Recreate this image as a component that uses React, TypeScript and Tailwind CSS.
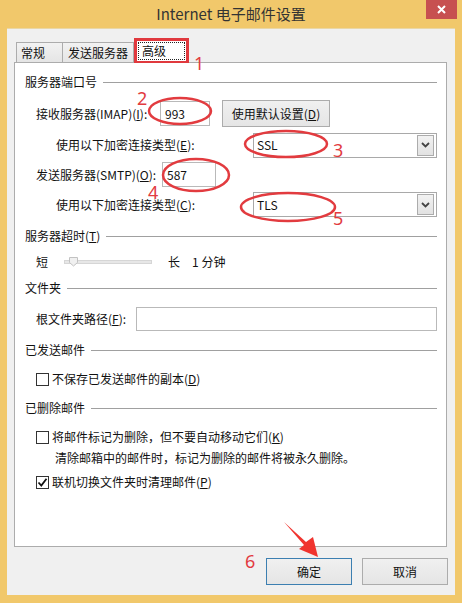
import React from 'react';

const font = "font-['Microsoft_YaHei','Noto_Sans_CJK_SC',sans-serif]";

function Header({ title }: { title: React.ReactNode }) {
  return (
    <div className="flex h-4 items-center">
      <span className="whitespace-nowrap">{title}</span>
      <div className="ml-[6px] h-px flex-1 bg-[#a0a0a0]" />
    </div>
  );
}

function Dropdown({ value }: { value: string }) {
  return (
    <div className="flex h-[25px] flex-1 items-center border border-[#a9a9a9] bg-white pl-[3px] pr-[2px]">
      <span className="flex-1">{value}</span>
      <div className="flex h-[21px] w-[17px] items-center justify-center border border-[#acacac] bg-gradient-to-b from-[#f2f2f2] to-[#e2e2e2]">
        <svg width="9" height="6" viewBox="0 0 9 6">
          <path d="M1 1 L4.5 4.5 L8 1" fill="none" stroke="#444" strokeWidth="1.8" />
        </svg>
      </div>
    </div>
  );
}

function Check({ checked, children }: { checked?: boolean; children: React.ReactNode }) {
  return (
    <div className="ml-[11px] flex h-4 items-center">
      <div className="flex h-[13px] w-[13px] items-center justify-center border border-[#333] bg-white">
        {checked && (
          <svg width="11" height="11" viewBox="0 0 11 11">
            <path d="M1.5 5.5 L4.3 8.5 L9.5 1.8" fill="none" stroke="#111" strokeWidth="1.8" />
          </svg>
        )}
      </div>
      <span className="ml-[3px] whitespace-nowrap">{children}</span>
    </div>
  );
}

export default function App() {
  return (
    <div className={`relative flex h-[603px] w-[462px] flex-col bg-[#f1c86b] text-[12px] leading-4 text-[#111] ${font}`}>
      {/* title bar */}
      <div className="relative flex h-[28px] items-center justify-center">
        <span className="text-[15px] text-[#333]">Internet 电子邮件设置</span>
        <div className="absolute right-[5px] top-0 flex h-[19px] w-[31px] items-center justify-center bg-[#c75050]">
          <svg width="9" height="9" viewBox="0 0 9 9">
            <path d="M1 1 L8 8 M8 1 L1 8" stroke="#fff" strokeWidth="2" />
          </svg>
        </div>
      </div>

      {/* client */}
      <div className="mx-[7px] mb-[8px] flex flex-1 flex-col border-t border-[#ead7a6] bg-[#f0f0f0] pt-[9px]">
        {/* tabs */}
        <div className="flex items-end pl-[9px]">
          <div className="flex h-[20px] w-[47px] items-center border border-b-0 border-[#acacac] bg-gradient-to-b from-[#f2f2f2] to-[#e5e5e5] pl-[4px]">
            常规
          </div>
          <div className="flex h-[20px] w-[71px] items-center border border-b-0 border-l-0 border-[#acacac] bg-gradient-to-b from-[#f2f2f2] to-[#e5e5e5] pl-[5px]">
            发送服务器
          </div>
          <div className="relative z-10 -mb-px h-[25px] w-[55px] border-[3px] border-b-2 border-[#e0393e] bg-white p-px">
            <div className="flex h-full items-center border border-dotted border-[#222] pl-[3px]">高级</div>
          </div>
        </div>

        {/* panel */}
        <div className="ml-[7px] mr-[8px] flex h-[485px] flex-col border border-[#acacac] bg-white pl-[10px] pr-[9px] pt-[11px]">
          <Header title="服务器端口号" />

          <div className="mt-[10px] flex h-[27px] items-center">
            <span className="ml-[11px] w-[124px] whitespace-nowrap">
              接收服务器(IMAP)(<u>I</u>):
            </span>
            <div className="flex h-[25px] w-[50px] items-center border border-[#b9b9b9] pl-[4px]">993</div>
            <div className="ml-[12px] flex h-[27px] w-[108px] items-center justify-center border border-[#acacac] bg-gradient-to-b from-[#f0f0f0] to-[#e5e5e5]">
              使用默认设置(<u>D</u>)
            </div>
          </div>

          <div className="mt-[6px] flex h-[24px] items-center">
            <span className="ml-[31px] w-[197px] whitespace-nowrap">
              使用以下加密连接类型(<u>E</u>):
            </span>
            <Dropdown value="SSL" />
          </div>

          <div className="mt-[5px] flex h-[25px] items-center">
            <span className="ml-[11px] w-[126px] whitespace-nowrap">
              发送服务器(SMTP)(<u>O</u>):
            </span>
            <div className="flex h-[25px] w-[54px] items-center border border-[#b9b9b9] pl-[4px]">587</div>
          </div>

          <div className="mt-[5px] flex h-[25px] items-center">
            <span className="ml-[31px] w-[197px] whitespace-nowrap">
              使用以下加密连接类型(<u>C</u>):
            </span>
            <Dropdown value="TLS" />
          </div>

          <div className="mt-[11px]">
            <Header
              title={
                <>
                  服务器超时(<u>T</u>)
                </>
              }
            />
          </div>

          <div className="mt-[10px] flex h-4 items-center">
            <span className="ml-[11px]">短</span>
            <div className="relative ml-[16px] h-[4px] w-[88px] border border-[#d6d6d6] bg-[#e7e7e7]">
              <svg className="absolute left-[4px] top-[-4px]" width="9" height="10" viewBox="0 0 9 10">
                <path d="M0.5 0.5 H8.5 V5.5 L4.5 9 L0.5 5.5 Z" fill="#f0f0f0" stroke="#c2c2c2" />
              </svg>
            </div>
            <span className="ml-[16px]">长</span>
            <span className="ml-[12px]">1 分钟</span>
          </div>

          <div className="mt-[10px]">
            <Header title="文件夹" />
          </div>

          <div className="mt-[11px] flex h-[24px] items-center">
            <span className="ml-[11px] w-[100px] whitespace-nowrap">
              根文件夹路径(<u>F</u>):
            </span>
            <div className="h-[24px] flex-1 border border-[#b9b9b9]" />
          </div>

          <div className="mt-[11px]">
            <Header title="已发送邮件" />
          </div>
          <div className="mt-[13px]">
            <Check>
              不保存已发送邮件的副本(<u>D</u>)
            </Check>
          </div>

          <div className="mt-[13px]">
            <Header title="已删除邮件" />
          </div>
          <div className="mt-[13px]">
            <Check>
              将邮件标记为删除，但不要自动移动它们(<u>K</u>)
            </Check>
          </div>
          <div className="ml-[30px] mt-[5px] h-4 whitespace-nowrap">
            清除邮箱中的邮件时，标记为删除的邮件将被永久删除。
          </div>
          <div className="mt-[8px]">
            <Check checked>
              联机切换文件夹时清理邮件(<u>P</u>)
            </Check>
          </div>
        </div>

        {/* buttons */}
        <div className="mt-[11px] flex justify-end gap-[10px] pr-[7px]">
          <div className="flex h-[27px] w-[86px] items-center justify-center border border-[#3c7fb1] bg-gradient-to-b from-[#f0f0f0] to-[#e5e5e5]">
            确定
          </div>
          <div className="flex h-[27px] w-[86px] items-center justify-center border border-[#acacac] bg-gradient-to-b from-[#f0f0f0] to-[#e5e5e5]">
            取消
          </div>
        </div>
      </div>

      {/* annotations */}
      <svg className="pointer-events-none absolute inset-0" width="462" height="603" viewBox="0 0 462 603">
        <g fill="none" stroke="#e23b3f" strokeWidth="2.5">
          <ellipse cx="180" cy="111" rx="31" ry="13" />
          <ellipse cx="286" cy="144" rx="41" ry="13" />
          <ellipse cx="196" cy="175" rx="33" ry="16" />
          <ellipse cx="288" cy="207" rx="47" ry="14" />
        </g>
        <g fill="#e23b3f" fontFamily="'Microsoft YaHei','Noto Sans',sans-serif" fontSize="18">
          <text x="194" y="70">1</text>
          <text x="137" y="105">2</text>
          <text x="333" y="157">3</text>
          <text x="148" y="199">4</text>
          <text x="333" y="225">5</text>
          <text x="245" y="568">6</text>
        </g>
        <path d="M284 522 L306 542 L313 537 L318 557 L299 549 L304 545 Z" fill="#f0342f" />
      </svg>
    </div>
  );
}
